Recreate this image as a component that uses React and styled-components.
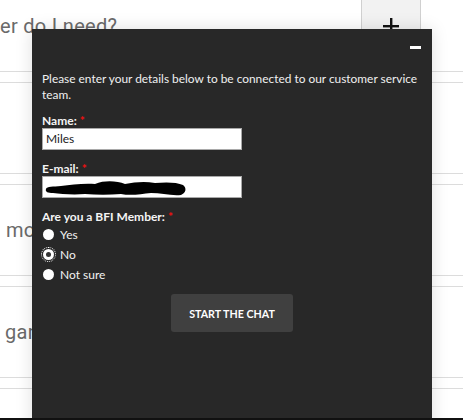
import React from "react";
import styled, { createGlobalStyle } from "styled-components";

const Global = createGlobalStyle`
  html, body { margin: 0; padding: 0; background: #fff; }
  body { width: 463px; height: 420px; overflow: hidden; font-family: Lato, "Liberation Sans", sans-serif; }
`;

const Page = styled.div`
  position: relative;
  width: 463px;
  height: 420px;
  overflow: hidden;
`;

const List = styled.div`
  display: flex;
  flex-direction: column;
  gap: 10px;
  margin-top: -20px;
`;

const Item = styled.div`
  display: flex;
  align-items: stretch;
  height: 90px;
  border-top: 1px solid #dcdcdc;
  border-bottom: 1px solid #dcdcdc;
`;

const Title = styled.div`
  flex: 1;
  display: flex;
  align-items: center;
  padding-left: ${(p) => p.$pad}px;
  font-family: Roboto, "Liberation Sans", sans-serif;
  font-size: 20px;
  color: #6a6a6a;
  letter-spacing: 0.3px;
  white-space: nowrap;
  overflow: hidden;
`;

const Toggle = styled.div`
  width: 58px;
  margin-right: 42px;
  background: #f2f2f2;
  border-left: 1px solid #d0d0d0;
  border-right: 1px solid #d0d0d0;
  display: flex;
  align-items: center;
  justify-content: center;
`;

const Panel = styled.div`
  position: absolute;
  left: 32px;
  top: 29px;
  width: 400px;
  height: 420px;
  background: #282828;
  box-shadow: 0 0 16px rgba(0, 0, 0, 0.13);
  padding: 0 10px;
  box-sizing: border-box;
  display: flex;
  flex-direction: column;
  color: #f2f2f2;
`;

const Header = styled.div`
  height: 42px;
  display: flex;
  justify-content: flex-end;
  align-items: flex-start;
  padding-top: 17px;
  box-sizing: border-box;
`;

const Minimize = styled.div`
  width: 11px;
  height: 3px;
  background: #fff;
  margin-right: 1px;
`;

const Intro = styled.p`
  margin: 0;
  font-size: 11.9px;
  line-height: 16px;
  color: #f0f0f0;
  white-space: nowrap;
`;

const Label = styled.div`
  margin-top: ${(p) => p.$mt}px;
  font-size: 12px;
  font-weight: 700;
  line-height: 14px;
  height: 14px;
  color: #f4f4f4;
`;

const Req = styled.span`
  color: #f01010;
  margin-left: 3px;
`;

const Field = styled.div`
  position: relative;
  width: 200px;
  height: 22px;
  box-sizing: border-box;
  background: #fff;
  border: 1px solid #a9a9a9;
  font-size: 12px;
  line-height: 20px;
  padding-left: 3px;
  color: #222;
`;

const Scribble = styled.svg`
  position: absolute;
  left: 2px;
  top: 2px;
`;

const RadioRow = styled.div`
  height: 20px;
  display: flex;
  align-items: center;
  gap: 6px;
  font-size: 12px;
  color: #f2f2f2;
`;

const Dot = styled.span`
  width: 11px;
  height: 11px;
  margin-left: 1px;
  border-radius: 50%;
  background: #fff;
  display: flex;
  align-items: center;
  justify-content: center;
  outline: ${(p) => (p.$focus ? "1px dotted #fff" : "none")};
  outline-offset: 1px;
  &::after {
    content: "";
    width: 5px;
    height: 5px;
    border-radius: 50%;
    background: ${(p) => (p.$checked ? "#333" : "transparent")};
  }
`;

const ButtonRow = styled.div`
  display: flex;
  justify-content: center;
  margin-top: 10px;
`;

const StartButton = styled.div`
  width: 122px;
  height: 38px;
  border-radius: 3px;
  background: #404040;
  color: #fff;
  font-size: 10.7px;
  font-weight: 700;
  display: flex;
  align-items: center;
  justify-content: center;
`;

const BottomEdge = styled.div`
  position: absolute;
  left: 0;
  right: 0;
  bottom: 0;
  height: 2px;
  background: #111;
`;

export default function App() {
  return (
    <Page>
      <Global />
      <List>
        <Item>
          <Title $pad={0}>er do I need?</Title>
          <Toggle>
            <svg width="16" height="16" viewBox="0 0 16 16">
              <rect x="7" y="0" width="2.4" height="16" fill="#111" />
              <rect x="0" y="7" width="16" height="2.4" fill="#111" />
            </svg>
          </Toggle>
        </Item>
        <Item>
          <Title $pad={6}></Title>
          <Toggle />
        </Item>
        <Item>
          <Title $pad={6}>mo</Title>
          <Toggle />
        </Item>
        <Item>
          <Title $pad={5}>gar</Title>
          <Toggle />
        </Item>
        <Item>
          <Title $pad={6}></Title>
          <Toggle />
        </Item>
      </List>

      <Panel>
        <Header>
          <Minimize />
        </Header>
        <Intro>
          Please enter your details below to be connected to our customer service
          <br />
          team.
        </Intro>
        <Label $mt={11}>
          Name:<Req>*</Req>
        </Label>
        <Field>Miles</Field>
        <Label $mt={12}>
          E-mail:<Req>*</Req>
        </Label>
        <Field>
          <Scribble width="142" height="17" viewBox="0 0 142 17">
            <path
              d="M1 10 C2 7 8 8 16 7 C26 6 38 4 50 5 C60 1 72 2 80 5 C90 3 100 2 110 4 C120 3 132 3 138 6 C142 9 141 14 136 16 C126 17 116 14 106 14 C96 15 86 17 76 15 C64 16 52 16 40 15 C28 16 16 15 8 14 C3 14 0 13 1 10 Z"
              fill="#000"
            />
          </Scribble>
        </Field>
        <Label $mt={12}>
          Are you a BFI Member:<Req>*</Req>
        </Label>
        <RadioRow>
          <Dot />
          Yes
        </RadioRow>
        <RadioRow>
          <Dot $checked $focus />
          No
        </RadioRow>
        <RadioRow>
          <Dot />
          Not sure
        </RadioRow>
        <ButtonRow>
          <StartButton>START THE CHAT</StartButton>
        </ButtonRow>
      </Panel>
      <BottomEdge />
    </Page>
  );
}
